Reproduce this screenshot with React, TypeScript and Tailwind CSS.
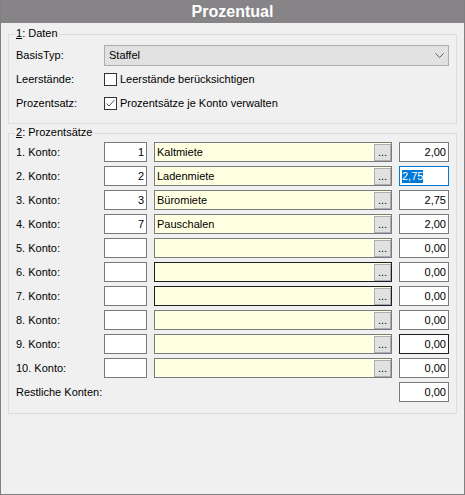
import type { ReactNode } from "react";

interface KontoRow {
  nr: string;
  konto: string;
  name: string;
  value: string;
  nameDark?: boolean;
  valueDark?: boolean;
  focused?: boolean;
}

const rows: KontoRow[] = [
  { nr: "1.", konto: "1", name: "Kaltmiete", value: "2,00" },
  { nr: "2.", konto: "2", name: "Ladenmiete", value: "2,75", focused: true },
  { nr: "3.", konto: "3", name: "Büromiete", value: "2,75" },
  { nr: "4.", konto: "7", name: "Pauschalen", value: "2,00" },
  { nr: "5.", konto: "", name: "", value: "0,00" },
  { nr: "6.", konto: "", name: "", value: "0,00", nameDark: true },
  { nr: "7.", konto: "", name: "", value: "0,00", nameDark: true },
  { nr: "8.", konto: "", name: "", value: "0,00" },
  { nr: "9.", konto: "", name: "", value: "0,00", valueDark: true },
  { nr: "10.", konto: "", name: "", value: "0,00" },
];

function GroupBox({
  mnemonic,
  label,
  className,
  children,
}: {
  mnemonic: string;
  label: string;
  className?: string;
  children: ReactNode;
}) {
  return (
    <div className={`relative border border-[#dcdcdc] ${className ?? ""}`}>
      <span className="absolute -top-[8px] left-[6px] bg-[#f0f0f0] px-[1px] leading-[13px]">
        <span className="underline underline-offset-1">{mnemonic}</span>
        {label}
      </span>
      {children}
    </div>
  );
}

function CheckBox({ checked }: { checked?: boolean }) {
  return (
    <span className="w-[13px] h-[13px] border border-[#333333] bg-white flex items-center justify-center">
      {checked && (
        <svg width="11" height="11" viewBox="0 0 11 11">
          <polyline points="1.5,5.5 4,8 9.5,2" fill="none" stroke="#555555" strokeWidth="1" />
        </svg>
      )}
    </span>
  );
}

export default function App() {
  return (
    <div className="w-[465px] h-[495px] flex flex-col bg-[#f0f0f0] border border-t-0 border-[#808080] font-['Liberation_Sans',Arial,sans-serif] text-[11px] text-black">
      <div className="h-[23px] shrink-0 bg-[#868486] flex items-center justify-center text-white font-bold text-[16px]">
        Prozentual
      </div>

      <div className="px-[7px] pt-[11px]">
        <GroupBox mnemonic="1" label=": Daten" className="pt-[8px] pb-[8px] pl-[7px] pr-[7px]">
          <div className="flex h-[24px] items-center">
            <span className="w-[88px]">BasisTyp:</span>
            <div className="flex-1 h-[21px] border border-[#adadad] bg-[#e1e1e1] flex items-center pl-[4px] pr-[4px]">
              <span className="flex-1">Staffel</span>
              <svg width="9" height="5" viewBox="0 0 9 5">
                <polyline points="0.5,0.5 4.5,4.5 8.5,0.5" fill="none" stroke="#606060" strokeWidth="1" />
              </svg>
            </div>
          </div>
          <div className="flex h-[24px] items-center">
            <span className="w-[88px]">Leerstände:</span>
            <CheckBox />
            <span className="ml-[3px]">Leerstände berücksichtigen</span>
          </div>
          <div className="flex h-[24px] items-center">
            <span className="w-[88px]">Prozentsatz:</span>
            <CheckBox checked />
            <span className="ml-[3px]">Prozentsätze je Konto verwalten</span>
          </div>
        </GroupBox>

        <GroupBox mnemonic="2" label=": Prozentsätze" className="mt-[9px] pt-[6px] pb-[9px] pl-[7px] pr-[7px]">
          {rows.map((r) => (
            <div key={r.nr} className="flex h-[24px] items-center">
              <span className="w-[88px]">{r.nr} Konto:</span>
              <div className="w-[43px] h-[20px] border border-[#7a7a7a] bg-white flex items-center justify-end pr-[2px]">
                {r.konto}
              </div>
              <div
                className={`ml-[7px] w-[238px] h-[20px] border bg-[#ffffe1] flex ${
                  r.nameDark ? "border-[#1e1e1e]" : "border-[#7a7a7a]"
                }`}
              >
                <span className="flex-1 self-center pl-[2px]">{r.name}</span>
                <span className="self-end w-[17px] h-[17px] border border-[#adadad] bg-[#e1e1e1] flex items-end justify-center pb-[2px] leading-none">
                  ...
                </span>
              </div>
              {r.focused ? (
                <div className="ml-[7px] w-[50px] h-[20px] border border-[#0078d7] bg-white flex items-center pl-[2px]">
                  <span className="bg-[#0078d7] text-white leading-[13px]">{r.value}</span>
                </div>
              ) : (
                <div
                  className={`ml-[7px] w-[50px] h-[20px] border bg-white flex items-center justify-end pr-[2px] ${
                    r.valueDark ? "border-[#1e1e1e]" : "border-[#7a7a7a]"
                  }`}
                >
                  {r.value}
                </div>
              )}
            </div>
          ))}
          <div className="flex h-[24px] items-center">
            <span>Restliche Konten:</span>
            <div className="ml-auto w-[50px] h-[20px] border border-[#7a7a7a] bg-white flex items-center justify-end pr-[2px]">
              0,00
            </div>
          </div>
        </GroupBox>
      </div>
    </div>
  );
}
